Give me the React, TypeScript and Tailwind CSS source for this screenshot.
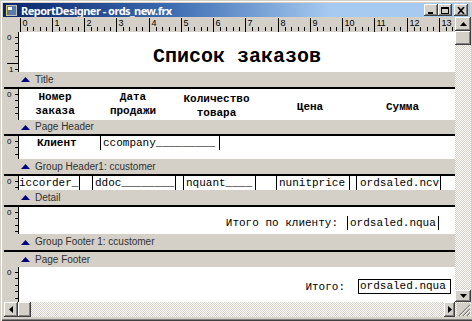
import React from 'react';

// classic Win2000 look
const bevel =
  'shadow-[inset_-1px_-1px_#404040,inset_1px_1px_#ffffff,inset_-2px_-2px_#808080]';
const dither =
  'bg-[image:repeating-conic-gradient(#d4d0c8_0%_25%,#ffffff_0%_50%)] bg-[length:2px_2px]';
const mono = "font-['Liberation_Mono','Courier_New',monospace]";

function TitleBar() {
  return (
    <div className="-ml-[1px] flex h-[14px] w-[467px] shrink-0 items-center bg-[linear-gradient(90deg,#0a246a_0%,#3a6ab0_35%,#a6caf0_70%,#a6caf0_100%)] pl-[3px] pr-[2px]">
      <svg width="11" height="11" viewBox="0 0 11 11" className="shrink-0">
        <rect x="0" y="0" width="11" height="11" fill="#c0c0c0" />
        <rect x="1" y="1" width="9" height="9" fill="#5a7ba8" />
        <rect x="2" y="2" width="4" height="3" fill="#ffffff" />
        <rect x="0" y="0" width="1" height="11" fill="#e0d050" />
      </svg>
      <span className="ml-[4px] text-[11px] font-bold leading-none tracking-[-0.5px] text-white">
        ReportDesigner - ords_new.frx
      </span>
      <div className="ml-auto flex items-center">
        <TitleBtn kind="min" />
        <TitleBtn kind="max" />
        <div className="w-[2px]" />
        <TitleBtn kind="close" />
      </div>
    </div>
  );
}

function TitleBtn({ kind }: { kind: 'min' | 'max' | 'close' }) {
  return (
    <div className={`flex h-[12px] w-[14px] items-center justify-center bg-[#d4d0c8] ${bevel}`}>
      <svg width="8" height="7" viewBox="0 0 8 7">
        {kind === 'min' && <rect x="1" y="5" width="5" height="2" fill="#000" />}
        {kind === 'max' && (
          <>
            <rect x="0.5" y="0.5" width="7" height="6" fill="none" stroke="#000" strokeWidth="1" />
            <rect x="0" y="0" width="8" height="2" fill="#000" />
          </>
        )}
        {kind === 'close' && (
          <path d="M1 0 L7 7 M7 0 L1 7" stroke="#000" strokeWidth="1.6" />
        )}
      </svg>
    </div>
  );
}

function HRuler() {
  const step = 32.25;
  const els: React.ReactNode[] = [];
  for (let n = 0; n <= 13; n++) {
    const x = Math.round(1.5 + n * step) + 0.5;
    els.push(<line key={'M' + n} x1={x} y1={1} x2={x} y2={15} stroke="#000" strokeWidth="1" />);
    els.push(
      <text key={'T' + n} x={x + 2} y={9} fontSize="9" fontFamily="Liberation Sans, sans-serif" fill="#000">
        {n}
      </text>,
    );
    for (let k = 1; k < 5; k++) {
      const xs = Math.round(x + (k * step) / 5) + 0.5;
      if (xs < 437) els.push(<line key={'m' + n + k} x1={xs} y1={10} x2={xs} y2={14} stroke="#000" strokeWidth="1" />);
    }
  }
  return (
    <div className="flex h-[15px] shrink-0 bg-[#d4d0c8]">
      <div className="w-[14px] shrink-0" />
      <svg width="437" height="15" className="shrink-0">
        {els}
      </svg>
    </div>
  );
}

function VRuler({ h, one }: { h: number; one?: boolean }) {
  const els: React.ReactNode[] = [];
  for (let k = 1; ; k++) {
    const y = Math.round(k * 6.46 - 1.5) + 0.5;
    if (y >= h - 1) break;
    if (one && k === 5) {
      els.push(<line key={k} x1={3} y1={y} x2={14} y2={y} stroke="#000" />);
      els.push(
        <text key="one" x={5} y={y + 8} fontSize="8" fontFamily="Liberation Sans, sans-serif" fill="#000">
          1
        </text>,
      );
    } else {
      els.push(<line key={k} x1={11} y1={y} x2={14} y2={y} stroke="#000" />);
    }
  }
  return (
    <svg width="15" height={h} className="shrink-0 bg-[#d4d0c8]">
      <text x={3} y={8} fontSize="8" fontFamily="Liberation Sans, sans-serif" fill="#000">
        0
      </text>
      {els}
      <line x1={14.5} y1={0} x2={14.5} y2={h} stroke="#000" />
    </svg>
  );
}

function Caption({ label, className }: { label: string; className: string }) {
  return (
    <div className={`flex shrink-0 items-center bg-[#d4d0c8] ${className}`}>
      <svg width="9" height="5" viewBox="0 0 9 5" className="ml-[17px]">
        <polygon points="4.5,0 9,5 0,5" fill="#000080" />
      </svg>
      <span className="ml-[5px] font-['Liberation_Sans',sans-serif] text-[10px] leading-none text-[#303030]">
        {label}
      </span>
    </div>
  );
}

function BandLine() {
  return <div className="h-[2px] shrink-0 bg-black" />;
}

function Band({ h, one, children }: { h: number; one?: boolean; children: React.ReactNode }) {
  return (
    <div className="flex shrink-0">
      <VRuler h={h} one={one} />
      <div className="relative flex-1 overflow-hidden bg-white">{children}</div>
    </div>
  );
}

function Field({ text, className }: { text: string; className: string }) {
  return (
    <div className={`h-[14px] shrink-0 overflow-hidden whitespace-pre border-black text-[11px] leading-[14px] ${className}`}>
      {text}
    </div>
  );
}

function Scroll() {
  return (
    <div className="flex h-[285px] w-[16px] flex-col">
      <div className={`flex h-[14px] shrink-0 items-center justify-center bg-[#d4d0c8] ${bevel}`}>
        <svg width="7" height="4" viewBox="0 0 7 4">
          <polygon points="3.5,0 7,4 0,4" fill="#000" />
        </svg>
      </div>
      <div className={`h-[14px] shrink-0 bg-[#d4d0c8] ${bevel}`} />
      <div className={`flex-1 ${dither}`} />
      <div className={`flex h-[12px] shrink-0 items-center justify-center bg-[#d4d0c8] ${bevel}`}>
        <svg width="7" height="4" viewBox="0 0 7 4">
          <polygon points="0,0 7,0 3.5,4" fill="#000" />
        </svg>
      </div>
    </div>
  );
}

function HScroll() {
  return (
    <div className="flex h-[15px] w-[451px]">
      <div className={`flex w-[14px] shrink-0 items-center justify-center bg-[#d4d0c8] ${bevel}`}>
        <svg width="4" height="7" viewBox="0 0 4 7">
          <polygon points="4,0 4,7 0,3.5" fill="#000" />
        </svg>
      </div>
      <div className={`w-[13px] shrink-0 bg-[#d4d0c8] ${bevel}`} />
      <div className={`flex-1 ${dither}`} />
      <div className={`flex w-[11px] shrink-0 items-center justify-center bg-[#d4d0c8] ${bevel}`}>
        <svg width="4" height="7" viewBox="0 0 4 7">
          <polygon points="0,0 4,3.5 0,7" fill="#000" />
        </svg>
      </div>
    </div>
  );
}

function Grip() {
  return (
    <div className={`h-[15px] w-[16px] ${dither}`}>
      <svg width="16" height="15" viewBox="0 0 16 15">
        <rect x="2" y="1" width="13" height="14" fill="#d4d0c8" />
        <path d="M15 3 L4 14 M15 7 L8 14 M15 11 L12 14" stroke="#808080" strokeWidth="1.2" />
        <path d="M15 4 L5 14 M15 8 L9 14 M15 12 L13 14" stroke="#ffffff" strokeWidth="0.8" />
      </svg>
    </div>
  );
}

export default function App() {
  return (
    <div className="flex h-[321px] w-[472px] flex-col overflow-hidden bg-[#d4d0c8] pb-[4px] pl-[4px] pr-[1px] pt-[3px] shadow-[inset_1px_1px_#d4d0c8,inset_2px_2px_#ffffff,inset_0_-1px_#404040,inset_0_-2px_#808080]">
      <TitleBar />
      <div className="grid grid-cols-[451px_16px] grid-rows-[285px_15px]">
        <div className={`flex flex-col overflow-hidden ${mono} text-black`}>
          <HRuler />

          {/* Title */}
          <Band h={40} one>
            <div className="pt-[15px] text-center text-[20px] font-bold leading-[20px]">Список заказов</div>
          </Band>
          <Caption label="Title" className="h-[15px]" />

          {/* Page Header */}
          <BandLine />
          <Band h={31}>
            <div className="flex text-[11px] font-bold leading-[14px]">
              <div className="w-[72px] pt-[1px] text-center">Номер<br />заказа</div>
              <div className="w-[84px] pt-[1px] text-center">Дата<br />продажи</div>
              <div className="w-[83px] pt-[3px] text-center">Количество<br />товара</div>
              <div className="w-[104px] pt-[11px] text-center">Цена</div>
              <div className="w-[81px] pt-[11px] text-center">Сумма</div>
            </div>
          </Band>
          <Caption label="Page Header" className="h-[14px]" />

          {/* Group Header */}
          <BandLine />
          <Band h={23}>
            <div className="flex text-[11px] leading-[14px]">
              <div className="ml-[18px] w-[63px] font-bold">Клиент</div>
              <Field text="ccompany_________" className="w-[120px] border-x pl-[2px]" />
            </div>
          </Band>
          <Caption label="Group Header1: ccustomer" className="h-[15px]" />

          {/* Detail */}
          <BandLine />
          <Band h={14}>
            <div className="flex">
              <Field text="iccorder_" className="w-[61px] border-r" />
              <Field text="ddoc________" className="ml-[12px] w-[84px] border-x pl-[2px]" />
              <Field text="nquant____" className="ml-[7px] w-[73px] border-x pl-[2px]" />
              <Field text="nunitprice" className="ml-[20px] w-[74px] border-x pl-[2px]" />
              <Field text="ordsaled.ncv" className="ml-[6px] w-[85px] border-x pl-[3px]" />
            </div>
          </Band>
          <Caption label="Detail" className="h-[15px]" />

          {/* Group Footer */}
          <BandLine />
          <Band h={27}>
            <div className="flex items-start justify-end pr-[16px] pt-[9px] text-[11px] leading-[14px]">
              <div className="mr-[9px]">Итого по клиенту:</div>
              <Field text="ordsaled.nqua" className="w-[92px] border-x pl-[2px]" />
            </div>
          </Band>
          <Caption label="Group Footer 1: ccustomer" className="h-[16px]" />
          <BandLine />

          {/* Page Footer */}
          <Caption label="Page Footer" className="h-[15px]" />
          <Band h={35}>
            <div className="flex items-start justify-end pr-[4px] pt-[12px] text-[11px] leading-[14px]">
              <div className="mr-[13px] pt-[1px]">Итого:</div>
              <div className="h-[15px] w-[93px] overflow-hidden whitespace-pre border border-black pl-[1px] leading-[13px]">
                ordsaled.nqua
              </div>
            </div>
          </Band>
        </div>
        <Scroll />
        <HScroll />
        <Grip />
      </div>
    </div>
  );
}
